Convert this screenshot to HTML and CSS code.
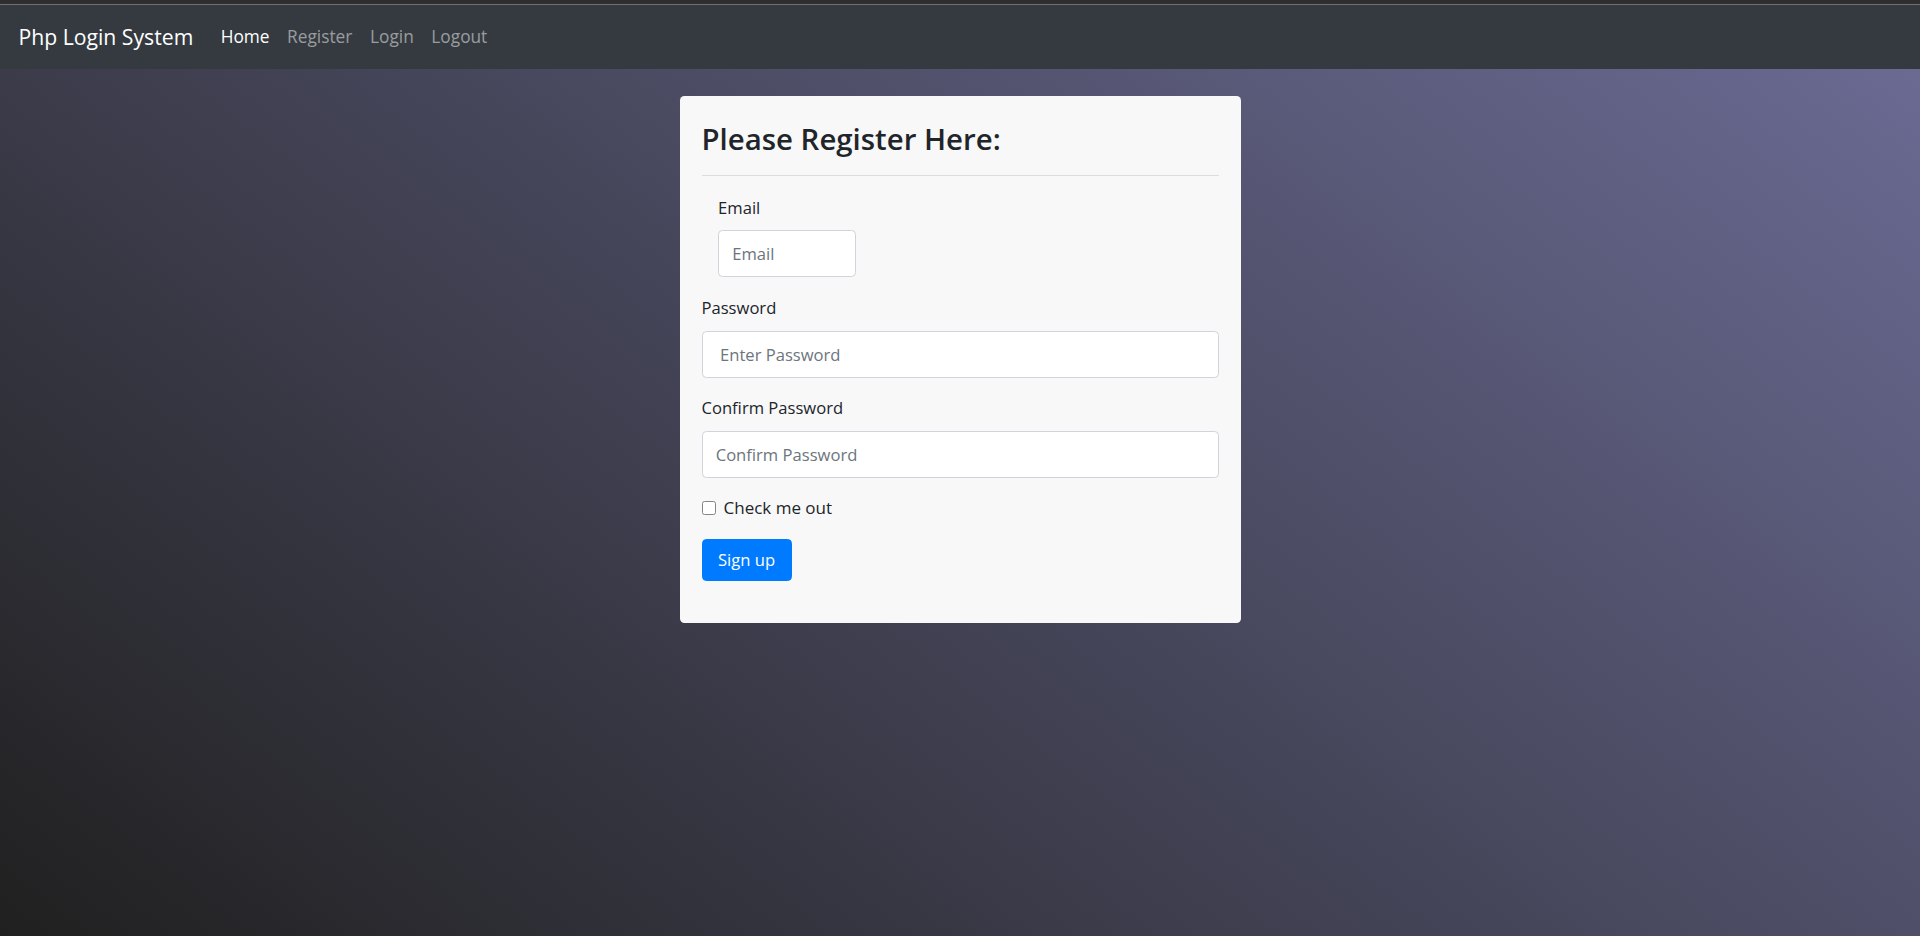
FILE: index.html
```html
<!DOCTYPE html>
<html lang="en">
<head>
<meta charset="utf-8">
<title>Php Login System</title>
<link rel="stylesheet" href="styles.css">
</head>
<body>
<div class="chrome-strip"></div>
<nav class="navbar">
  <a class="brand" href="#">Php Login System</a>
  <ul class="nav">
    <li><a class="nav-link active" href="#">Home</a></li>
    <li><a class="nav-link" href="#">Register</a></li>
    <li><a class="nav-link" href="#">Login</a></li>
    <li><a class="nav-link" href="#">Logout</a></li>
  </ul>
</nav>
<main class="page">
  <section class="card">
    <h3 class="card-title">Please Register Here:</h3>
    <hr class="divider">
    <form class="form">
      <div class="field field-inset">
        <label class="label" for="email">Email</label>
        <input class="input input-short" id="email" type="email" placeholder="Email">
      </div>
      <div class="field">
        <label class="label" for="pw">Password</label>
        <input class="input" id="pw" type="password" placeholder=" Enter Password">
      </div>
      <div class="field">
        <label class="label" for="pw2">Confirm Password</label>
        <input class="input" id="pw2" type="password" placeholder="Confirm Password">
      </div>
      <div class="check">
        <input class="check-box" id="chk" type="checkbox">
        <label class="check-label" for="chk">Check me out</label>
      </div>
      <button class="btn" type="submit">Sign up</button>
    </form>
  </section>
</main>
</body>
</html>
```
FILE: styles.css
```css
html {
  height: 100%;
}
body {
  margin: 0;
  min-height: 100%;
  font-family: "Open Sans", "Noto Sans", sans-serif;
  color: #212529;
  background: linear-gradient(38deg, #202020 0%, #6c6c96 100%);
}
.chrome-strip {
  height: 4px;
  background: #2e2e2e;
  border-bottom: 1px solid #707070;
}
.navbar {
  height: 64px;
  background: #343a40;
  display: flex;
  align-items: center;
  padding: 0 18.5px;
}
.brand {
  font-size: 21.2px;
  color: #ffffff;
  text-decoration: none;
  margin-right: 18.6px;
  line-height: 1.5;
}
.nav {
  list-style: none;
  margin: 0;
  padding: 0;
  display: flex;
}
.nav-link {
  display: block;
  padding: 0 8.8px;
  font-size: 17.3px;
  line-height: 1.5;
  color: rgba(255, 255, 255, 0.5);
  text-decoration: none;
}
.nav-link.active {
  color: #ffffff;
}
.page {
  padding-top: 27.2px;
  display: flex;
  justify-content: center;
}
.card {
  width: 561px;
  box-sizing: border-box;
  background: #f8f8f9;
  border-radius: 4.4px;
  padding: 22px 22px 42px;
}
.card-title {
  margin: 0;
  font-size: 29.4px;
  font-weight: 600;
  line-height: 43px;
  color: #212529;
}
.divider {
  margin: 14px 0 18.4px;
  border: 0;
  border-top: 1px solid #dcdddf;
}
.form {
  display: flex;
  flex-direction: column;
  align-items: flex-start;
}
.field {
  display: flex;
  flex-direction: column;
  align-self: stretch;
  margin-bottom: 17.6px;
}
.field-inset {
  padding-left: 16.6px;
  align-items: flex-start;
}
.label {
  font-size: 16.6px;
  line-height: 26.4px;
  margin-bottom: 9.3px;
}
.input {
  box-sizing: border-box;
  height: 47px;
  padding: 0 13.2px;
  font-family: inherit;
  font-size: 16.6px;
  color: #495057;
  background: #ffffff;
  border: 1px solid #ced4da;
  border-radius: 4.4px;
  outline: none;
}
.input::placeholder {
  color: #6c757d;
  opacity: 1;
}
.input-short {
  width: 137.6px;
}
.check {
  display: flex;
  align-items: flex-start;
  margin-bottom: 17px;
}
.check-box {
  appearance: none;
  -webkit-appearance: none;
  box-sizing: border-box;
  width: 14px;
  height: 14px;
  margin: 5.3px 8px 0 0;
  background: #ffffff;
  border: 1px solid #858585;
  border-radius: 2.5px;
}
.check-label {
  font-size: 17px;
  line-height: 26.4px;
}
.btn {
  box-sizing: border-box;
  height: 42px;
  padding: 0 15.5px;
  font-family: inherit;
  font-size: 16.6px;
  color: #ffffff;
  background: #007bff;
  border: 1px solid #007bff;
  border-radius: 4.4px;
  cursor: pointer;
}
```
